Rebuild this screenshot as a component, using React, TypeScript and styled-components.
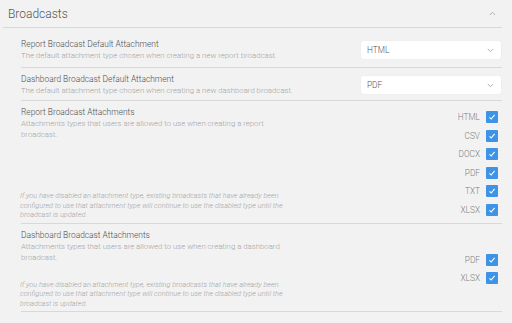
import * as React from 'react';
import styled, { createGlobalStyle } from 'styled-components';

const GlobalStyle = createGlobalStyle`
  html, body {
    margin: 0;
    padding: 0;
    background: #f2f2f2;
  }
  body {
    font-family: Roboto, "Liberation Sans", sans-serif;
    color: #666;
  }
`;

const Page = styled.div`
  width: 512px;
  height: 323px;
  overflow: hidden;
  background: #f2f2f2;
`;

const Section = styled.section`
  margin-left: 3px;
  width: 499px;
`;

const SectionHeader = styled.div`
  display: flex;
  align-items: center;
  justify-content: space-between;
  height: 27px;
  padding: 0 6px 0 5px;
  border-bottom: 1px solid #d8d8d8;
`;

const SectionTitle = styled.h2`
  margin: 0;
  font-size: 12px;
  font-weight: 300;
  color: #555;
`;

const SectionBody = styled.div`
  padding-left: 18px;
`;

interface IRow {
  tall?: boolean;
}

const SettingRow = styled.div<IRow>`
  display: flex;
  align-items: ${props => (props.tall ? 'stretch' : 'center')};
  justify-content: space-between;
  padding: ${props => (props.tall ? '6px 0 3px' : '6px 0 4px')};
  border-bottom: 1px solid #d8d8d8;
  &:first-child {
    padding-top: 11px;
    padding-bottom: 6px;
  }
`;

const SettingText = styled.div`
  display: flex;
  flex-direction: column;
`;

const AttachCol = styled.div`
  display: flex;
  flex-direction: column;
  justify-content: space-between;
  width: 266px;
`;

const SettingTitle = styled.div`
  font-size: 8.4px;
  line-height: 11px;
  font-weight: 300;
  color: #4f4f4f;
`;

const SettingDesc = styled.div`
  font-size: 7.8px;
  line-height: 11px;
  font-weight: 300;
  color: #a4a4a4;
`;

const Note = styled.div`
  margin-top: 17px;
  margin-left: -1px;
  font-size: 7.3px;
  line-height: 9.5px;
  font-style: italic;
  font-weight: 300;
  color: #a4a4a4;
`;

const SelectBox = styled.div`
  display: flex;
  align-items: center;
  justify-content: space-between;
  box-sizing: border-box;
  width: 140px;
  height: 18px;
  margin-right: 1px;
  padding: 0 7px 0 6px;
  background: #fff;
  border-radius: 2px;
  box-shadow: 0 0 1px rgba(0, 0, 0, 0.12);
  font-size: 8.3px;
  font-weight: 300;
  color: #555;
`;

const CheckList = styled.div`
  display: flex;
  flex-direction: column;
  justify-content: center;
  gap: 6.5px;
  padding: 4px 0;
  margin-right: 4px;
`;

const CheckRow = styled.label`
  display: flex;
  align-items: center;
  justify-content: flex-end;
  gap: 6px;
  height: 12px;
  font-size: 8.3px;
  font-weight: 300;
  color: #808080;
`;

const CheckBox = styled.span`
  display: inline-flex;
  align-items: center;
  justify-content: center;
  width: 12px;
  height: 12px;
  border-radius: 1px;
  background: #3d93e6;
`;

const Chevron = ({ up }: { up?: boolean }) => (
  <svg width="7" height="5" viewBox="0 0 7 5">
    <path
      d={up ? 'M0.8 4 L3.5 1.3 L6.2 4' : 'M0.8 1 L3.5 3.7 L6.2 1'}
      fill="none"
      stroke="#a0a0a0"
      strokeWidth="0.8"
    />
  </svg>
);

const Tick = () => (
  <svg width="8" height="8" viewBox="0 0 8 8">
    <path d="M1.5 4.4 L3.2 6 L6.6 1.8" fill="none" stroke="#fff" strokeWidth="1.1" />
  </svg>
);

const NOTE =
  'If you have disabled an attachment type, existing broadcasts that have already been configured to use that attachment type will continue to use the disabled type until the broadcast is updated.';

const Select = ({ value }: { value: string }) => (
  <SelectBox>
    <span>{value}</span>
    <Chevron />
  </SelectBox>
);

const Checks = ({ items }: { items: string[] }) => (
  <CheckList>
    {items.map(item => (
      <CheckRow key={item}>
        {item}
        <CheckBox>
          <Tick />
        </CheckBox>
      </CheckRow>
    ))}
  </CheckList>
);

export default function App() {
  return (
    <Page>
      <GlobalStyle />
      <Section>
        <SectionHeader>
          <SectionTitle>Broadcasts</SectionTitle>
          <Chevron up />
        </SectionHeader>
        <SectionBody>
          <SettingRow>
            <SettingText>
              <SettingTitle>Report Broadcast Default Attachment</SettingTitle>
              <SettingDesc>The default attachment type chosen when creating a new report broadcast.</SettingDesc>
            </SettingText>
            <Select value="HTML" />
          </SettingRow>
          <SettingRow>
            <SettingText>
              <SettingTitle>Dashboard Broadcast Default Attachment</SettingTitle>
              <SettingDesc>The default attachment type chosen when creating a new dashboard broadcast.</SettingDesc>
            </SettingText>
            <Select value="PDF" />
          </SettingRow>
          <SettingRow tall>
            <AttachCol>
              <div>
                <SettingTitle>Report Broadcast Attachments</SettingTitle>
                <SettingDesc>Attachments types that users are allowed to use when creating a report broadcast.</SettingDesc>
              </div>
              <Note>{NOTE}</Note>
            </AttachCol>
            <Checks items={['HTML', 'CSV', 'DOCX', 'PDF', 'TXT', 'XLSX']} />
          </SettingRow>
          <SettingRow tall>
            <AttachCol>
              <div>
                <SettingTitle>Dashboard Broadcast Attachments</SettingTitle>
                <SettingDesc>Attachments types that users are allowed to use when creating a dashboard broadcast.</SettingDesc>
              </div>
              <Note>{NOTE}</Note>
            </AttachCol>
            <Checks items={['PDF', 'XLSX']} />
          </SettingRow>
        </SectionBody>
      </Section>
    </Page>
  );
}
